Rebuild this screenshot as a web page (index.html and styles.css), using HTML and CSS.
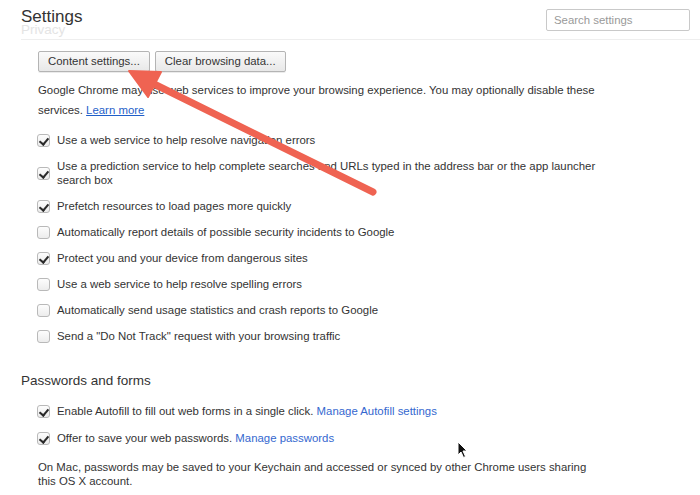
FILE: index.html
```html
<!DOCTYPE html>
<html>
<head>
<meta charset="utf-8">
<link rel="stylesheet" href="styles.css">
</head>
<body>
<div class="page">
  <header class="header">
    <div class="title-row">
      <h1 class="title">Settings</h1>
      <div class="search">Search settings</div>
    </div>
    <div class="ghost">Privacy</div>
  </header>

  <section class="section">
    <div class="buttons">
      <button class="btn">Content settings...</button>
      <button class="btn">Clear browsing data...</button>
    </div>
    <p class="desc">Google Chrome may use web services to improve your browsing experience. You may optionally disable these<br>services. <a class="learn">Learn more</a></p>
    <ul class="opts">
      <li class="opt"><span class="cb on"></span><span class="lbl">Use a web service to help resolve navigation errors</span></li>
      <li class="opt"><span class="cb on"></span><span class="lbl">Use a prediction service to help complete searches and URLs typed in the address bar or the app launcher<br>search box</span></li>
      <li class="opt"><span class="cb on"></span><span class="lbl">Prefetch resources to load pages more quickly</span></li>
      <li class="opt"><span class="cb"></span><span class="lbl">Automatically report details of possible security incidents to Google</span></li>
      <li class="opt"><span class="cb on"></span><span class="lbl">Protect you and your device from dangerous sites</span></li>
      <li class="opt"><span class="cb"></span><span class="lbl">Use a web service to help resolve spelling errors</span></li>
      <li class="opt"><span class="cb"></span><span class="lbl">Automatically send usage statistics and crash reports to Google</span></li>
      <li class="opt"><span class="cb"></span><span class="lbl">Send a "Do Not Track" request with your browsing traffic</span></li>
    </ul>
  </section>

  <section class="section section-pw">
    <h2 class="sec-title">Passwords and forms</h2>
    <ul class="opts">
      <li class="opt"><span class="cb on"></span><span class="lbl">Enable Autofill to fill out web forms in a single click. <a class="link">Manage Autofill settings</a></span></li>
      <li class="opt"><span class="cb on"></span><span class="lbl">Offer to save your web passwords. <a class="link">Manage passwords</a></span></li>
    </ul>
    <p class="note">On Mac, passwords may be saved to your Keychain and accessed or synced by other Chrome users sharing<br>this OS X account.</p>
  </section>

  <svg class="annot" width="700" height="495" viewBox="0 0 700 495">
    <line x1="373" y1="192" x2="150" y2="82" stroke="#ef6352" stroke-width="7" stroke-linecap="round"/>
    <polygon points="129,71 161,72 148,97" fill="#ef6352" stroke="#ef6352" stroke-width="2" stroke-linejoin="round"/>
  </svg>

  <svg class="cursor" width="12" height="18" viewBox="0 0 12 18">
    <path d="M1 1 L1 14 L4 11 L6.5 16.5 L8.5 15.5 L6 10 L10 10 Z" fill="#111" stroke="#fff" stroke-width="1"/>
  </svg>
</div>
</body>
</html>
```

FILE: styles.css
```css
* { box-sizing: border-box; }
html, body { margin: 0; padding: 0; background: #fff; }
body {
  font-family: "Liberation Sans", Arial, Helvetica, sans-serif;
  color: #333;
  font-size: 11.4px;
}
.page {
  position: relative;
  width: 700px;
  height: 495px;
  overflow: hidden;
}
.header {
  margin-left: 21px;
  border-bottom: 1px solid #eeeeee;
  height: 40px;
  overflow: hidden;
}
.title-row {
  display: flex;
  justify-content: space-between;
  align-items: flex-start;
  padding-top: 6px;
  padding-right: 10px;
  height: 24px;
}
.title {
  margin: 0;
  font-size: 17px;
  font-weight: normal;
  line-height: 22px;
  color: #333;
}
.search {
  margin-top: 3px;
  width: 144px;
  height: 22px;
  border: 1px solid #c9c9c9;
  border-radius: 2px;
  padding-left: 7px;
  line-height: 20px;
  color: #999;
  font-size: 11.4px;
}
.ghost {
  font-size: 13.5px;
  line-height: 14px;
  color: #e4e4e4;
  margin-top: -1px;
}
.section {
  padding-left: 38px;
}
.buttons {
  display: flex;
  gap: 5px;
  margin-top: 11px;
}
.btn {
  font-family: inherit;
  font-size: 11.4px;
  color: #333;
  height: 21px;
  padding: 0 9px;
  border: 1px solid #b4b4b4;
  border-radius: 2px;
  background: linear-gradient(#fafafa, #e8e8e8);
  box-shadow: 0 1px 0 rgba(0,0,0,0.08);
  line-height: 19px;
}
.desc {
  margin: 8px 0 0;
  line-height: 20px;
}
.learn {
  color: #1f5fc9;
  text-decoration: underline;
}
.link {
  color: #3467cf;
  text-decoration: none;
}
.opts {
  list-style: none;
  margin: 13px 0 0;
  padding: 0;
  display: flex;
  flex-direction: column;
  gap: 12px;
}
.opt {
  display: flex;
  align-items: center;
  line-height: 14px;
}
.cb {
  flex: none;
  width: 13px;
  height: 13px;
  border: 1px solid #b9b9b9;
  border-radius: 3px;
  background: linear-gradient(#fdfdfd, #ececec);
  margin-right: 7px;
  position: relative;
  margin-left: -1px;
}
.cb.on::after {
  content: "";
  position: absolute;
  left: 3px;
  top: 1px;
  width: 4px;
  height: 7px;
  border: solid #2a2a2a;
  border-width: 0 2px 2px 0;
  transform: rotate(40deg);
}
.section-pw {
  padding-left: 38px;
}
.sec-title {
  margin: 29px 0 0 -17px;
  font-size: 13.5px;
  font-weight: normal;
  line-height: 18px;
  color: #333;
}
.section-pw .opts {
  margin-top: 14px;
  gap: 13px;
}
.note {
  margin: 15px 0 0;
  line-height: 14px;
}
.annot {
  position: absolute;
  left: 0;
  top: 0;
  pointer-events: none;
}
.cursor {
  position: absolute;
  left: 457px;
  top: 441px;
}
```
